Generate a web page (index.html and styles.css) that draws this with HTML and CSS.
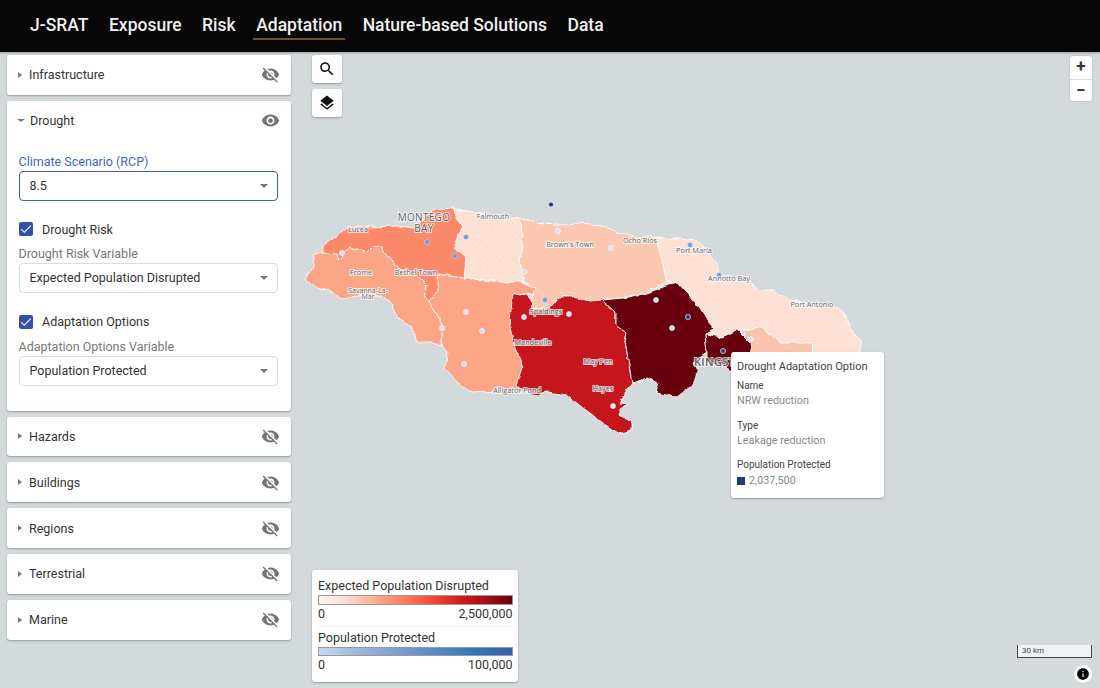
FILE: index.html
```html
<!DOCTYPE html>
<html lang="en">
<head>
    <meta charset="UTF-8">
    <meta name="viewport" content="width=device-width, initial-scale=1.0">
    <title>J-SRAT</title>
    <link rel="stylesheet" href="styles.css">
</head>
<body>
    <nav class="topnav">
        <a class="nav-link">J-SRAT</a>
        <a class="nav-link">Exposure</a>
        <a class="nav-link">Risk</a>
        <a class="nav-link nav-active">Adaptation</a>
        <a class="nav-link">Nature-based Solutions</a>
        <a class="nav-link">Data</a>
    </nav>

    <div class="main">
        <div class="map">
            <svg class="map-canvas" viewBox="0 52 1100 636">
                <defs>
                    <path id="eye-off" d="M12 7c2.76 0 5 2.24 5 5 0 .65-.13 1.26-.36 1.83l2.92 2.92c1.51-1.26 2.7-2.89 3.43-4.75-1.73-4.39-6-7.5-11-7.5-1.4 0-2.74.25-3.98.7l2.16 2.16C10.74 7.13 11.35 7 12 7zM2 4.27l2.28 2.28.46.46C3.08 8.3 1.78 10.02 1 12c1.73 4.39 6 7.5 11 7.5 1.55 0 3.03-.3 4.38-.84l.42.42L19.73 22 21 20.73 3.27 3 2 4.27zM7.53 9.8l1.55 1.55c-.05.21-.08.43-.08.65 0 1.66 1.34 3 3 3 .22 0 .44-.03.65-.08l1.55 1.55c-.67.33-1.41.53-2.2.53-2.76 0-5-2.24-5-5 0-.79.2-1.53.53-2.2zm4.31-.78l3.15 3.15.02-.16c0-1.66-1.34-3-3-3l-.17.01z"/>
                    <pattern id="dots-light" width="6" height="6" patternUnits="userSpaceOnUse">
                        <rect width="6" height="6" fill="#fee1d5"/>
                        <circle cx="1.5" cy="1.5" r=".5" fill="#fbcdb9"/>
                        <circle cx="4.5" cy="4.5" r=".5" fill="#fbcdb9"/>
                    </pattern>
                    <pattern id="dots-peach" width="4" height="4" patternUnits="userSpaceOnUse">
                        <rect width="4" height="4" fill="#fcbfa7"/>
                        <circle cx="1" cy="1" r=".5" fill="#fedccf"/>
                        <circle cx="3" cy="3" r=".5" fill="#fedccf"/>
                    </pattern>
                    <!-- roughens the straight polygon edges into a coastline -->
                    <filter id="rough" x="0" y="0" width="100%" height="100%" filterUnits="userSpaceOnUse" primitiveUnits="userSpaceOnUse">
                        <feTurbulence type="fractalNoise" baseFrequency="0.09" numOctaves="3" seed="4" result="noise"/>
                        <feDisplacementMap in="SourceGraphic" in2="noise" scale="5" xChannelSelector="R" yChannelSelector="G"/>
                    </filter>
                </defs>

                <g class="parishes" filter="url(#rough)">
                    <polygon fill="#fee1d5" points="655,237 680,238 697,240 707,252 718,265 720,275 750,282 760,290 773,290 790,300 833,305 843,312 850,327 860,343 860,356 813,356 812,343 780,343 760,327 745,330 737,330 722,337 705,334 715,330 707,320 700,308 687,293 677,282 667,283 660,252"/>
                    <polygon fill="url(#dots-peach)" points="745,330 760,327 780,343 812,343 813,356 745,356"/>
                    <polygon fill="#fdc8b2" points="518,218 543,223 567,225 583,223 607,227 617,232 633,237 655,237 660,252 667,283 645,293 620,297 600,300 590,301 573,297 560,297 553,303 548,309 532,309 531,300 535,288 527,283 520,282 524,282 520,262 523,235"/>
                    <polygon fill="url(#dots-light)" points="453,208 477,213 500,219 518,218 523,235 520,262 524,282 500,282 463,278 466,258 454,248 462,228"/>
                    <polygon fill="#fca587" points="438,274 463,278 500,282 520,282 535,288 533,295 527,293 513,295 511,308 510,328 515,347 523,368 517,385 527,393 507,390 472,393 457,382 445,368 447,352 442,346 442,325 428,301 438,292"/>
                    <polygon fill="#fca587" points="313,255 323,252 336,254 338,260 350,247 367,252 372,247 380,246 387,255 397,267 417,275 427,285 424,297 428,301 442,325 442,346 433,343 418,343 410,325 397,317 393,305 383,295 363,295 342,299 333,292 317,288 306,279 313,267"/>
                    <polygon fill="#fc8a6a" points="323,245 333,238 347,228 367,227 400,226 413,228 423,220 433,210 453,208 462,228 454,248 466,258 464,278 438,274 438,292 428,301 424,297 427,285 417,275 397,267 387,255 380,246 372,247 367,252 350,247 338,260 336,254 323,252"/>
                    <polygon fill="#c4171c" points="513,295 527,293 531,300 532,309 548,309 553,303 560,297 573,297 590,301 602,300 615,312 615,325 627,333 625,340 632,383 625,393 620,403 628,404 620,408 620,415 632,423 632,430 618,434 603,423 590,413 583,408 567,395 547,392 540,395 527,393 517,385 523,368 515,347 510,328 511,308"/>
                    <polygon fill="#67000d" points="602,300 623,298 647,293 677,282 687,293 700,308 707,320 715,330 705,334 707,353 693,362 698,373 690,387 677,397 656,393 658,383 647,378 632,383 625,340 627,333 615,325 615,312"/>
                    <polygon fill="#67000d" points="705,334 722,337 737,330 750,343 752,352 745,372 728,372 725,365 707,362 707,353"/>
                </g>

                <g class="points">
                    <circle class="pt-navy" cx="551" cy="204.5" r="2.5"/>
                    <circle class="pt-mid" cx="427" cy="242" r="2.5"/>
                    <circle class="pt-mid" cx="466" cy="237" r="2.5"/>
                    <circle class="pt-mid" cx="455" cy="256" r="2.5"/>
                    <circle class="pt-mid" cx="545" cy="300" r="2.5"/>
                    <circle class="pt-mid" cx="690" cy="245" r="2.5"/>
                    <circle class="pt-mid" cx="719" cy="275" r="2.5"/>
                    <circle class="pt-pale" cx="342" cy="253" r="2.5"/>
                    <circle class="pt-pale" cx="558" cy="231" r="2.5"/>
                    <circle class="pt-pale" cx="548" cy="245" r="2.5"/>
                    <circle class="pt-pale" cx="611" cy="248" r="2.5"/>
                    <circle class="pt-pale" cx="524" cy="272" r="2.5"/>
                    <circle class="pt-pale" cx="524" cy="317" r="2.5"/>
                    <circle class="pt-pale" cx="569" cy="314" r="2.5"/>
                    <circle class="pt-pale" cx="466" cy="312" r="2.5"/>
                    <circle class="pt-pale" cx="482" cy="331" r="2.5"/>
                    <circle class="pt-pale" cx="464" cy="364" r="2.5"/>
                    <circle class="pt-pale" cx="442" cy="328" r="2.5"/>
                    <circle class="pt-pale" cx="656" cy="300" r="2.5"/>
                    <circle class="pt-pale" cx="672" cy="328" r="2.5"/>
                    <circle class="pt-pale" cx="751" cy="339" r="2.5"/>
                    <circle class="pt-pale" cx="613" cy="406" r="2.5"/>
                    <circle class="pt-navy" cx="688" cy="317" r="2.5"/>
                    <circle class="pt-navy" cx="723" cy="351" r="2.5"/>
                </g>

                <g class="labels">
                    <text class="city"><tspan x="424" y="221">MONTEGO</tspan><tspan x="424" y="231.5">BAY</tspan></text>
                    <text class="town" x="493" y="219">Falmouth</text>
                    <text class="town" x="358" y="232">Lucea</text>
                    <text class="town" x="361" y="275">Frome</text>
                    <text class="town" x="416" y="275">Bethel Town</text>
                    <text class="town town-small"><tspan x="368" y="292.5">Savanna-La-</tspan><tspan x="368" y="299">Mar</tspan></text>
                    <text class="town" x="570" y="247">Brown's Town</text>
                    <text class="town" x="640" y="243">Ocho Rios</text>
                    <text class="town" x="694" y="253">Port Maria</text>
                    <text class="town" x="729" y="281">Annotto Bay</text>
                    <text class="town" x="812" y="307">Port Antonio</text>
                    <text class="town" x="546" y="314">Spaldings</text>
                    <text class="town" x="533" y="345">Mandeville</text>
                    <text class="town" x="598" y="364">May Pen</text>
                    <text class="town" x="603" y="391">Hayes</text>
                    <text class="town" x="517" y="393">Alligator Pond</text>
                    <text class="city city-cut" x="694" y="366">KINGST</text>
                </g>
            </svg>

            <div class="map-tools">
                <button class="tool-btn"><svg viewBox="0 0 24 24"><path d="M15.5 14h-.79l-.28-.27C15.41 12.59 16 11.11 16 9.5 16 5.91 13.09 3 9.5 3S3 5.91 3 9.5 5.91 16 9.5 16c1.61 0 3.09-.59 4.23-1.57l.27.28v.79l5 4.99L20.49 19l-4.99-5zm-6 0C7.01 14 5 11.99 5 9.5S7.01 5 9.5 5 14 7.01 14 9.5 11.99 14 9.5 14z"/></svg></button>
                <button class="tool-btn"><svg viewBox="0 0 24 24"><path d="M11.99 18.54l-7.37-5.73L3 14.07l9 7 9-7-1.63-1.27-7.38 5.74zM12 16l7.36-5.73L21 9l-9-7-9 7 1.63 1.27L12 16z"/></svg></button>
            </div>

            <div class="zoom-ctrl">
                <div class="zoom-btn">+</div>
                <div class="zoom-btn">&minus;</div>
            </div>

            <div class="tooltip">
                <div class="tip-title">Drought Adaptation Option</div>
                <div class="tip-key">Name</div>
                <div class="tip-val">NRW reduction</div>
                <div class="tip-key">Type</div>
                <div class="tip-val">Leakage reduction</div>
                <div class="tip-key">Population Protected</div>
                <div class="tip-val tip-swatch-row"><span class="swatch"></span>2,037,500</div>
            </div>

            <div class="legend">
                <div class="legend-title">Expected Population Disrupted</div>
                <div class="legend-bar bar-red"></div>
                <div class="legend-range"><span>0</span><span>2,500,000</span></div>
                <hr class="legend-rule">
                <div class="legend-title">Population Protected</div>
                <div class="legend-bar bar-blue"></div>
                <div class="legend-range"><span>0</span><span>100,000</span></div>
            </div>

            <div class="scale">30 km</div>
            <div class="info"><svg viewBox="0 0 24 24"><path d="M12 2C6.48 2 2 6.48 2 12s4.48 10 10 10 10-4.48 10-10S17.52 2 12 2zm1 15h-2v-6h2v6zm0-8h-2V7h2v2z"/></svg></div>
        </div>

        <aside class="sidebar">
            <section class="panel">
                <div class="panel-head">
                    <span class="arrow-right"></span>
                    <span class="panel-title">Infrastructure</span>
                    <svg class="eye" viewBox="0 0 24 24"><use href="#eye-off"/></svg>
                </div>
            </section>

            <section class="panel">
                <div class="panel-head">
                    <span class="arrow-down"></span>
                    <span class="panel-title">Drought</span>
                    <svg class="eye" viewBox="0 0 24 24"><path d="M12 4.5C7 4.5 2.73 7.61 1 12c1.73 4.39 6 7.5 11 7.5s9.27-3.11 11-7.5c-1.73-4.39-6-7.5-11-7.5zM12 17c-2.76 0-5-2.24-5-5s2.24-5 5-5 5 2.24 5 5-2.24 5-5 5zm0-8c-1.66 0-3 1.34-3 3s1.34 3 3 3 3-1.34 3-3-1.34-3-3-3z"/></svg>
                </div>
                <div class="panel-body">
                    <label class="field-label field-label-focus">Climate Scenario (RCP)</label>
                    <div class="select select-focus">8.5<span class="select-arrow"></span></div>

                    <div class="check-row">
                        <span class="check"><svg viewBox="0 0 24 24"><path d="M9 16.17 4.83 12l-1.42 1.41L9 19 21 7l-1.41-1.41z"/></svg></span>
                        Drought Risk
                    </div>
                    <label class="field-label">Drought Risk Variable</label>
                    <div class="select">Expected Population Disrupted<span class="select-arrow"></span></div>

                    <div class="check-row">
                        <span class="check"><svg viewBox="0 0 24 24"><path d="M9 16.17 4.83 12l-1.42 1.41L9 19 21 7l-1.41-1.41z"/></svg></span>
                        Adaptation Options
                    </div>
                    <label class="field-label">Adaptation Options Variable</label>
                    <div class="select">Population Protected<span class="select-arrow"></span></div>
                </div>
            </section>

            <section class="panel">
                <div class="panel-head">
                    <span class="arrow-right"></span>
                    <span class="panel-title">Hazards</span>
                    <svg class="eye" viewBox="0 0 24 24"><use href="#eye-off"/></svg>
                </div>
            </section>
            <section class="panel">
                <div class="panel-head">
                    <span class="arrow-right"></span>
                    <span class="panel-title">Buildings</span>
                    <svg class="eye" viewBox="0 0 24 24"><use href="#eye-off"/></svg>
                </div>
            </section>
            <section class="panel">
                <div class="panel-head">
                    <span class="arrow-right"></span>
                    <span class="panel-title">Regions</span>
                    <svg class="eye" viewBox="0 0 24 24"><use href="#eye-off"/></svg>
                </div>
            </section>
            <section class="panel">
                <div class="panel-head">
                    <span class="arrow-right"></span>
                    <span class="panel-title">Terrestrial</span>
                    <svg class="eye" viewBox="0 0 24 24"><use href="#eye-off"/></svg>
                </div>
            </section>
            <section class="panel">
                <div class="panel-head">
                    <span class="arrow-right"></span>
                    <span class="panel-title">Marine</span>
                    <svg class="eye" viewBox="0 0 24 24"><use href="#eye-off"/></svg>
                </div>
            </section>
        </aside>
    </div>
</body>
</html>
```

FILE: styles.css
```css
* {
    box-sizing: border-box;
}
body {
    margin: 0;
    width: 1100px;
    height: 688px;
    overflow: hidden;
    font-family: Roboto, Arial, sans-serif;
    background-color: #d4dadc;
    color: #333;
}

/* top bar */
.topnav {
    position: relative;
    z-index: 3;
    height: 52px;
    display: flex;
    align-items: center;
    padding-left: 27px;
    gap: 14.5px;
    background-color: #070707;
    box-shadow: 0 1px 2px rgba(0, 0, 0, 0.3);
}
.nav-link {
    height: 27px;
    padding: 0 3px;
    line-height: 24px;
    font-size: 17.5px;
    font-weight: 500;
    color: #f0f0f0;
    border-bottom: 1px solid transparent;
}
.nav-active {
    border-bottom: 2px solid #6f5220;
}

.main {
    position: relative;
    height: 636px;
}

/* left column */
.sidebar {
    position: relative;
    width: 298px;
    padding: 3px 7px 0;
    display: flex;
    flex-direction: column;
    gap: 6px;
}
.panel {
    background: #fff;
    border-radius: 3px;
    box-shadow: 0 1px 2px rgba(0, 0, 0, 0.3);
}
.panel-head {
    height: 39.8px;
    display: flex;
    align-items: center;
    padding-right: 11px;
    font-size: 12.5px;
}
.panel-title {
    flex: 1;
}
.arrow-right {
    margin: 0 7px 0 11px;
    border-left: 4px solid #777;
    border-top: 3.5px solid transparent;
    border-bottom: 3.5px solid transparent;
}
.arrow-down {
    margin: 0 5px 0 10px;
    border-top: 3.5px solid #777;
    border-left: 4px solid transparent;
    border-right: 4px solid transparent;
}
.eye {
    width: 19px;
    height: 19px;
    fill: #757575;
}
.panel-body {
    padding: 13px 13px 25px 11.5px;
    font-size: 12.5px;
}
.field-label {
    display: block;
    height: 17px;
    line-height: 15px;
    color: #777;
}
.field-label-focus {
    color: #3f66c4;
}
.select {
    position: relative;
    height: 30px;
    line-height: 28px;
    padding-left: 10px;
    border: 1px solid #dcdcdc;
    border-radius: 4px;
}
.select-focus {
    border: 1.5px solid #3f5fb5;
    line-height: 27px;
}
.select-arrow {
    position: absolute;
    right: 9px;
    top: 12px;
    border-top: 4px solid #777;
    border-left: 4px solid transparent;
    border-right: 4px solid transparent;
}
.check-row {
    display: flex;
    align-items: center;
    gap: 9px;
    height: 20px;
    margin: 18.5px 0 7px;
}
.check {
    display: flex;
    width: 14px;
    height: 14px;
    margin-left: 0.5px;
    border-radius: 2px;
    background-color: #3450ac;
}
.check svg {
    width: 14px;
    height: 14px;
    fill: #fff;
}

/* map area, behind the sidebar */
.map {
    position: absolute;
    left: 0;
    top: 0;
    width: 1100px;
    height: 636px;
}
.map-canvas {
    position: absolute;
    left: 0;
    top: 0;
    width: 1100px;
    height: 636px;
}
.parishes polygon {
    stroke: #fff;
    stroke-width: 0.9;
    stroke-linejoin: round;
}
.pt-navy {
    fill: #1f3d7a;
    stroke: #fff;
    stroke-width: 0.7;
}
.pt-mid {
    fill: #6f9bd8;
    stroke: #dde7f5;
    stroke-width: 0.5;
}
.pt-pale {
    fill: #d2e3f5;
    stroke: #fff;
    stroke-width: 0.6;
}
.labels text {
    font-family: "Open Sans", "Noto Sans", sans-serif;
    text-anchor: middle;
    fill: #5c6266;
    stroke: rgba(255, 255, 255, 0.75);
    stroke-width: 2px;
    paint-order: stroke;
}
.labels .town {
    font-size: 7.3px;
}
.labels .town-small {
    font-size: 7px;
}
.labels .city {
    font-size: 10px;
    letter-spacing: 0.3px;
}
.labels .city-cut {
    font-size: 11px;
    font-weight: 600;
    text-anchor: start;
}

.map-tools {
    position: absolute;
    left: 312px;
    top: 3px;
    display: flex;
    flex-direction: column;
    gap: 6px;
}
.tool-btn {
    display: flex;
    align-items: center;
    justify-content: center;
    width: 30px;
    height: 28px;
    padding: 0;
    border: none;
    border-radius: 3px;
    background: #fff;
    box-shadow: 0 1px 2px rgba(0, 0, 0, 0.3);
}
.tool-btn svg {
    width: 18px;
    height: 18px;
    fill: #111;
}

.zoom-ctrl {
    position: absolute;
    left: 1070px;
    top: 4px;
    width: 22px;
    border-radius: 3px;
    background: #fff;
    box-shadow: 0 0 2px rgba(0, 0, 0, 0.2);
}
.zoom-btn {
    height: 22.5px;
    line-height: 21px;
    text-align: center;
    font-size: 17px;
    font-weight: 700;
    color: #333;
}
.zoom-btn + .zoom-btn {
    border-top: 1px solid #ddd;
}

.tooltip {
    position: absolute;
    left: 731px;
    top: 300px;
    width: 153px;
    height: 146px;
    padding: 7.5px 6px;
    border-radius: 3px;
    background: #fff;
    box-shadow: 0 1px 2px rgba(0, 0, 0, 0.3);
    font-size: 10.8px;
    color: #444;
}
.tip-title {
    font-size: 11px;
    line-height: 14px;
    margin-bottom: 6.5px;
}
.tip-key {
    font-size: 10px;
    line-height: 12px;
}
.tip-val {
    line-height: 14px;
    margin: 2px 0 11.5px;
    color: #888;
}
.tip-swatch-row {
    display: flex;
    align-items: center;
    gap: 4px;
    margin: 3px 0 0;
}
.swatch {
    width: 8px;
    height: 8px;
    background-color: #1f3d73;
}

.legend {
    position: absolute;
    left: 312px;
    top: 518px;
    width: 206px;
    height: 112px;
    padding: 8px 5.5px 0 6px;
    border-radius: 3px;
    background: #fff;
    box-shadow: 0 1px 2px rgba(0, 0, 0, 0.3);
    font-size: 12.5px;
}
.legend-title {
    height: 17px;
    line-height: 15px;
}
.legend-bar {
    height: 9.5px;
    border: 1px solid #999;
}
.bar-red {
    background: linear-gradient(to right, #fff5f0, #fee0d2, #fcbba1, #fc9272, #fb6a4a, #ef3b2c, #cb181d, #a50f15, #67000d);
}
.bar-blue {
    background: linear-gradient(to right, #c6dbef, #9ab8de, #7da0d0, #5a8ac6, #2f78bc, #3a5db0);
}
.legend-range {
    display: flex;
    justify-content: space-between;
    height: 16px;
    line-height: 17px;
}
.legend-rule {
    margin: 5px 0 3px;
    border: none;
    border-top: 1px solid #eee;
}

.scale {
    position: absolute;
    left: 1017px;
    top: 593px;
    width: 75px;
    height: 13px;
    padding-left: 4px;
    border: 1px solid #444;
    border-top: none;
    background: rgba(255, 255, 255, 0.65);
    font-size: 8px;
    line-height: 12px;
    color: #444;
}
.info {
    position: absolute;
    left: 1074px;
    top: 613px;
    display: flex;
    align-items: center;
    justify-content: center;
    width: 18px;
    height: 18px;
    border-radius: 50%;
    background: #fff;
}
.info svg {
    width: 14px;
    height: 14px;
    fill: #000;
}
```
